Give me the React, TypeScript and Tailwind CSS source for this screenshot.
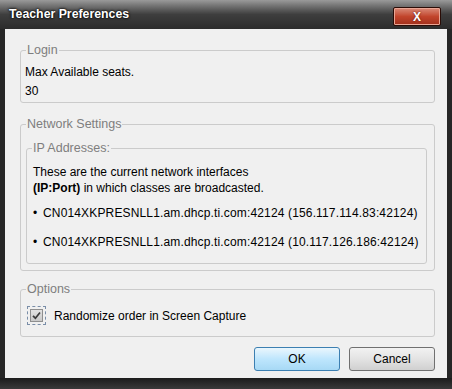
import React from "react";

const font = { fontFamily: '"Liberation Sans", Arial, sans-serif' };

function Group({
  title,
  className,
  children,
}: {
  title: string;
  className?: string;
  children: React.ReactNode;
}) {
  return (
    <fieldset className={`border border-[#cbcbcb] rounded-[3px] ${className ?? ""}`}>
      <legend className="ml-[5px] px-px text-[12.5px] leading-[14px] text-[#7e7e7e]">{title}</legend>
      {children}
    </fieldset>
  );
}

function CheckBox() {
  return (
    <div className="w-[19px] h-[19px] border border-dashed border-[#7a8ea8] flex items-center justify-center">
      <div className="w-[13px] h-[13px] border border-[#8f8f8f] bg-gradient-to-b from-[#e2e2e2] to-[#c9c9c9] flex items-center justify-center">
        <svg width="9" height="9" viewBox="0 0 9 9">
          <path d="M1 4.8 L3.4 7.2 L8 1.5" fill="none" stroke="#3b3b3b" strokeWidth="1.7" />
        </svg>
      </div>
    </div>
  );
}

export default function App() {
  return (
    <div
      className="w-[452px] h-[389px] flex flex-col bg-[#262626] overflow-hidden"
      style={font}
    >
      {/* title bar */}
      <div className="h-[29px] flex items-center justify-between pl-[9px] pr-[11px] bg-gradient-to-b from-[#9a9a9a] via-[#3e3e3e] to-[#2c2c2c]">
        <span className="text-white font-bold text-[12.3px] [text-shadow:0_0_3px_#000,0_0_2px_#000]">
          Teacher Preferences
        </span>
        <div className="w-[48px] h-[19px] mt-[4px] border border-[#2a0c06] rounded-[2px] bg-gradient-to-b from-[#d98a78] via-[#c2452c] to-[#a22f1b] shadow-[inset_0_0_0_1px_#e9a594] flex items-center justify-center">
          <span className="text-white font-bold text-[12px] leading-none [text-shadow:0_0_2px_#5a1508]">X</span>
        </div>
      </div>

      {/* content */}
      <div className="mx-[5px] h-[349px] bg-[#f0f0f0] pt-[14px] pl-[15px] pr-[12px] flex flex-col text-[12px] text-black">
        <Group title="Login">
          <div className="pl-[4px] pt-[7px] pb-[2px]">
            <div className="leading-[17px]">Max Available seats.</div>
            <div className="leading-[17px] mt-[2px]">30</div>
          </div>
        </Group>

        <Group title="Network Settings" className="mt-[14px]">
          <div className="pl-[5px] pr-[7px] pt-[10px] pb-[6px]">
            <Group title="IP Addresses:">
              <div className="pl-[6px] pt-[9px] pb-[13px]">
                <div className="leading-[16px]">These are the current network interfaces</div>
                <div className="leading-[16px]">
                  <b>(IP:Port)</b> in which classes are broadcasted.
                </div>
                <div className="leading-[16px] mt-[9px] flex tracking-[0.15px]">
                  <span className="w-[10px]">•</span>
                  CN014XKPRESNLL1.am.dhcp.ti.com:42124 (156.117.114.83:42124)
                </div>
                <div className="leading-[16px] mt-[13px] flex tracking-[0.15px]">
                  <span className="w-[10px]">•</span>
                  CN014XKPRESNLL1.am.dhcp.ti.com:42124 (10.117.126.186:42124)
                </div>
              </div>
            </Group>
          </div>
        </Group>

        <Group title="Options" className="mt-[11px]">
          <div className="pl-[6px] pt-[10px] pb-[11px] flex items-center gap-[8px]">
            <CheckBox />
            <span>Randomize order in Screen Capture</span>
          </div>
        </Group>

        <div className="mt-[10px] flex justify-end gap-[9px]">
          <button className="w-[86px] h-[24px] rounded-[3px] border border-[#3c7fb1] bg-gradient-to-b from-[#eaf6fd] via-[#bee6fd] to-[#a7d9f5] text-[12px]">
            OK
          </button>
          <button className="w-[86px] h-[24px] rounded-[3px] border border-[#707070] bg-gradient-to-b from-[#f2f2f2] via-[#e3e3e3] to-[#d0d0d0] text-[12px]">
            Cancel
          </button>
        </div>
      </div>

      {/* bottom frame */}
      <div className="flex-1 bg-gradient-to-b from-[#1c1c1c] to-[#3a3a3a]" />
    </div>
  );
}
